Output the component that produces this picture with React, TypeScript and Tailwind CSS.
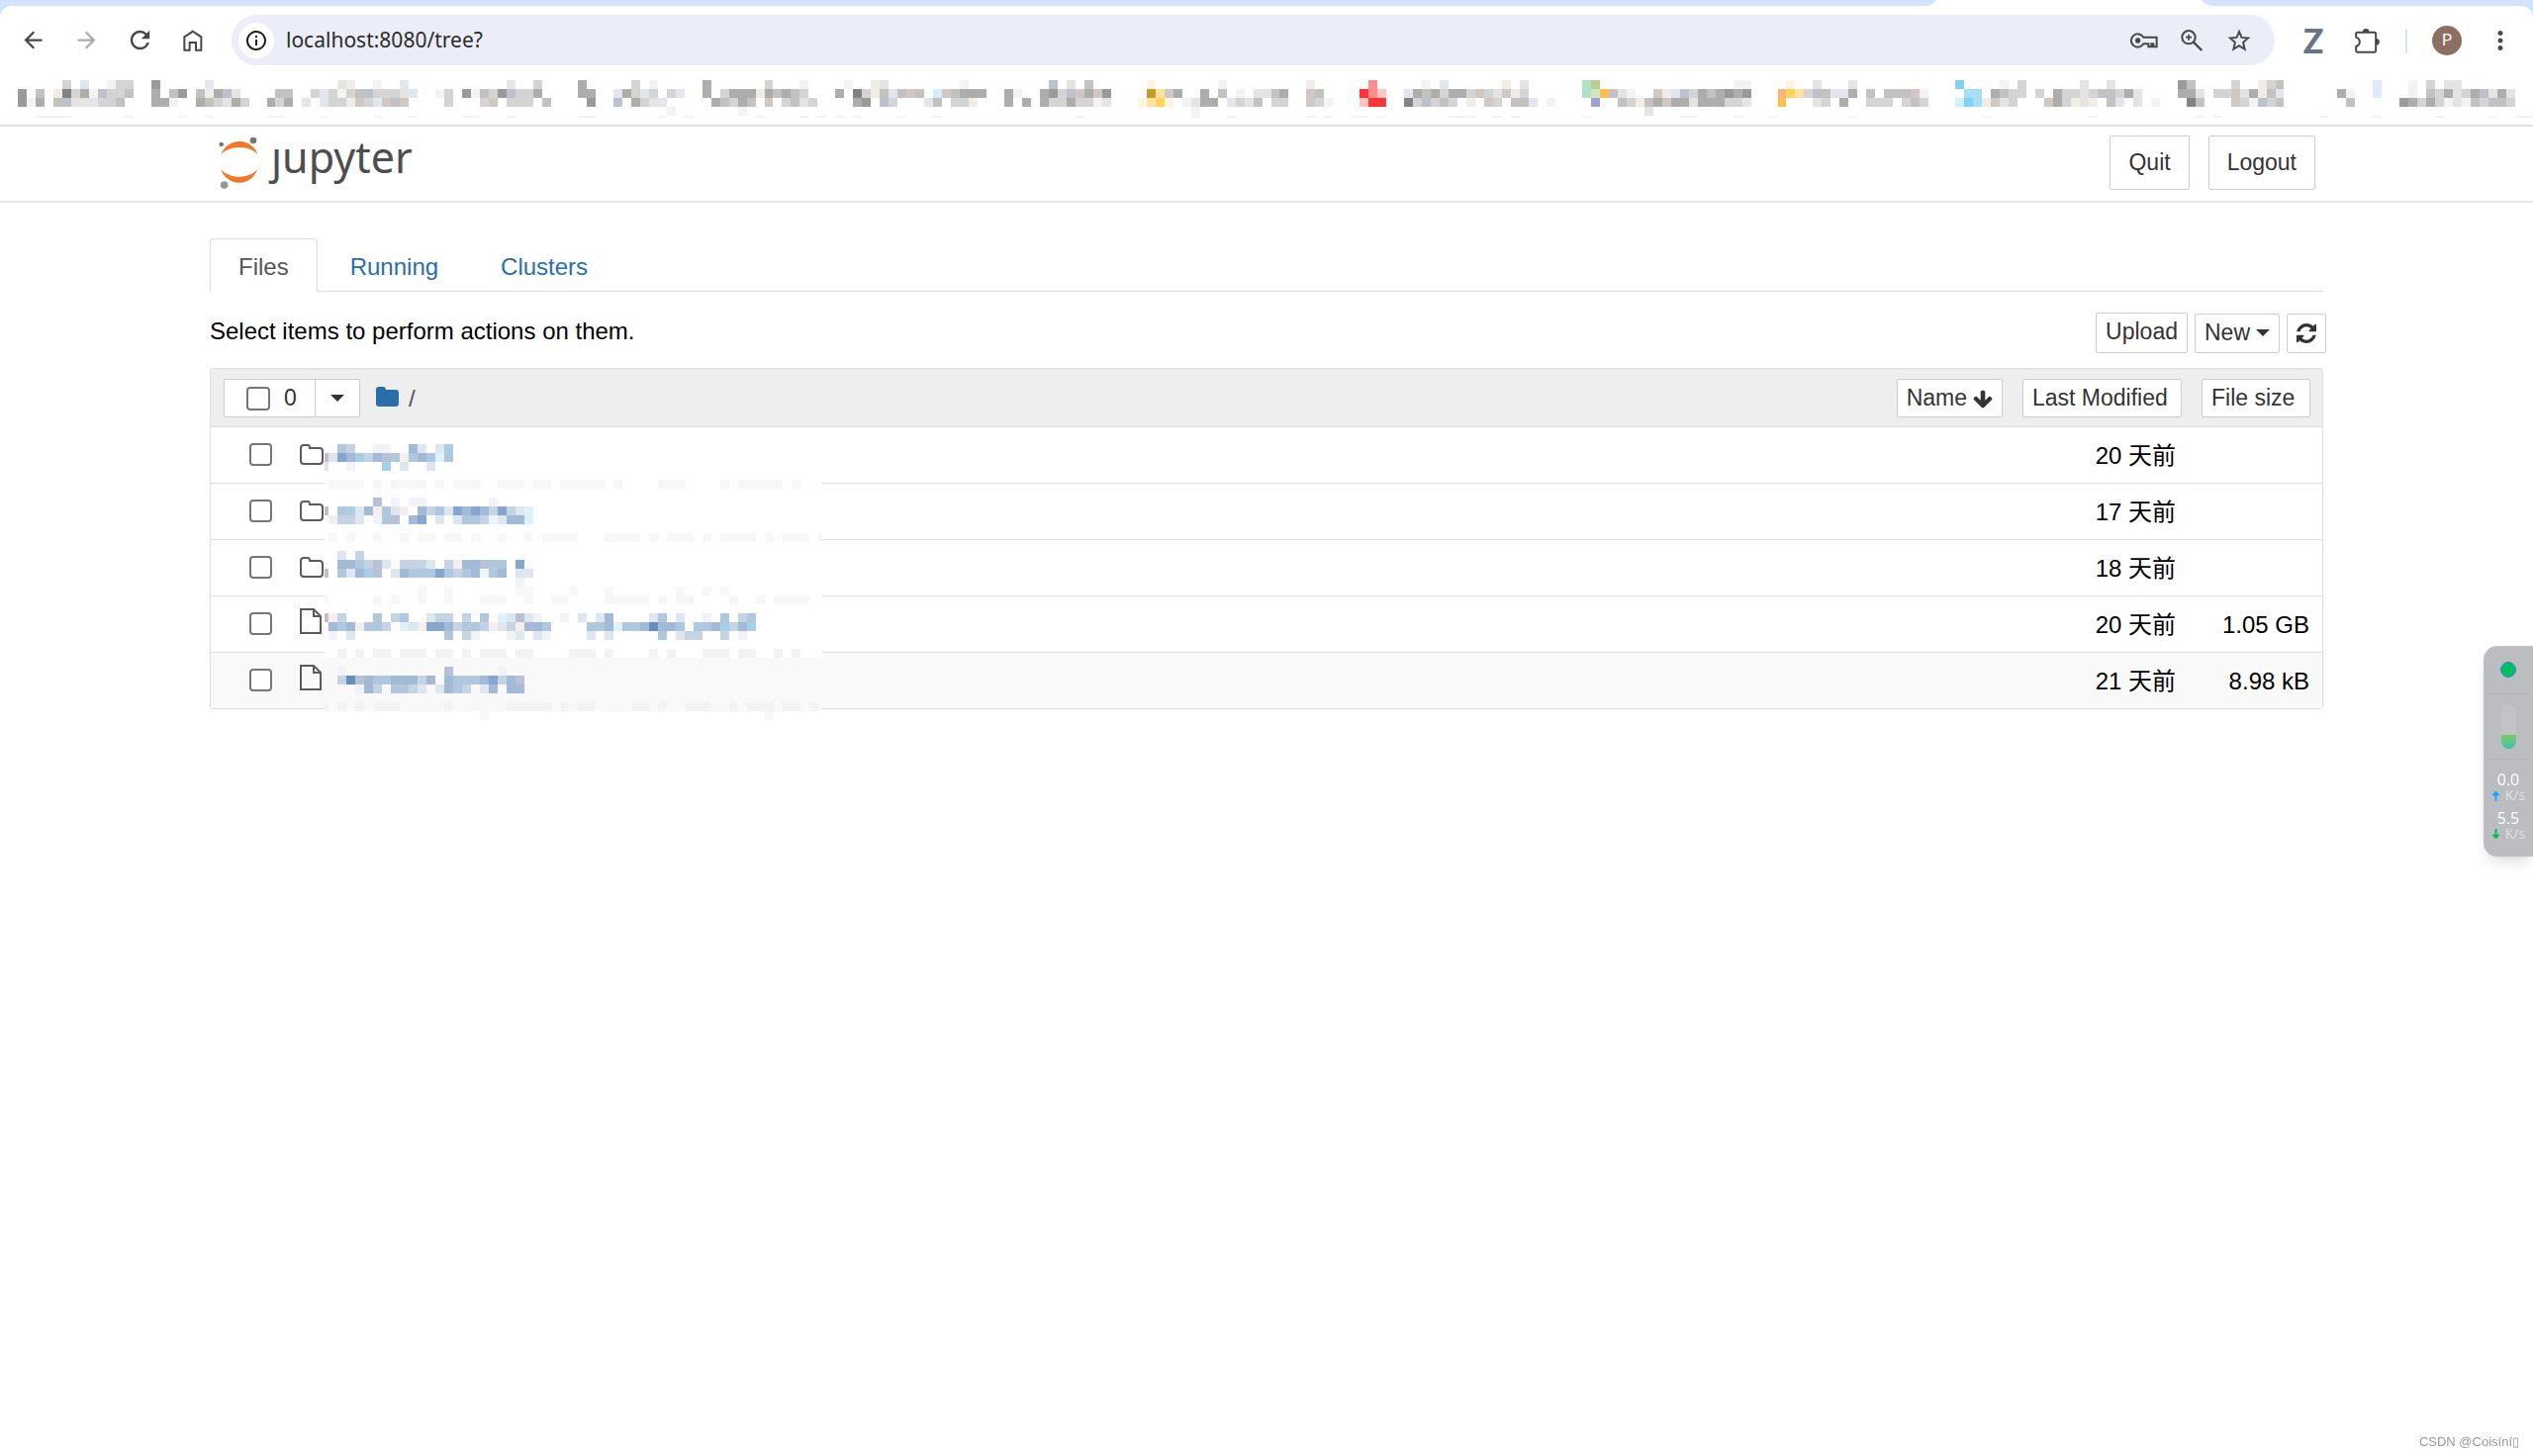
import { useState } from "react";
import type { ReactNode } from "react";
import {
  MdArrowBack,
  MdArrowForward,
  MdInfoOutline,
  MdMoreVert,
  MdRefresh,
} from "react-icons/md";

// Pixelated areas. Every row holds runs of cells: the start column,
// then one palette letter per cell ("." leaves a cell empty).
type MosaicRow = { y: number; h?: number; runs: string };

const BOOKMARK_COLORS: Record<string, string> = {
  a: "#f3f3f3",
  b: "#e4e4e3",
  c: "#d3d4d3",
  d: "#c3c2c1",
  e: "#adadac",
  f: "#9a9a9b",
  g: "#828385",
  h: "#e2e6ed",
  i: "#f2ece6",
  j: "#bcc1cc",
  k: "#d1c8c4",
  w: "#fff5e1",
  z: "#ffe2a0",
  y: "#ffd258",
  Y: "#c99a2c",
  R: "#ff3538",
  r: "#ff8c8d",
  q: "#ffc4c4",
  G: "#b2e0c2",
  m: "#b8cf92",
  n: "#d0e6c6",
  P: "#9ca2d8",
  O: "#ffc04a",
  o: "#f5b581",
  S: "#7fd1f5",
  s: "#a6dff7",
  t: "#d3effb",
  B: "#dfeafe",
};

const BOOKMARK_ROWS: MosaicRow[] = [
  {
    y: 0,
    runs: "5c.h..acc 15f 21h 36bi..a..h 55h 58c 63e 69c.a 77e 84c...a 93a..ib 106a 116j.b.d 127w 135a 145i 152r 158a.h 167i.b 176Gm 193aa 199w..b...b 218S 223a.c 232b..b 243fd 249c..icd 265B 269a.c.bb",
  },
  {
    y: 1,
    runs: "0f.d.igceajccd 15e.df.diejb 29dd 33chcacdjcccbh 47ac.fadcfjcce 63ee 67hechc.ch 77e.ceeeiededc 92e.gcidhdkd.tkdeee 111ea..efcjkekf 127Yzke..e.d.a.bbde 145kd 151Rrq 156hedeceeckcbkic 176GnOdba..kihjcedefef 198oyzcjdhhe.d.dddka 219ss.edcc.c.eccbcddceb 243eeb.cckbeidh 261ea 265B 269a.dcebcejbeb",
  },
  {
    y: 2,
    runs: "0fae.djbbhccd 15eea..edcbec 28ece.h.hccikchkdk 48c...ck.ccc.d 64f..j.ecbh 78edced.k.cdbc 94ef.jc...hd.cci 111e.e.ecceccab 126wzyw.abee.hcbd.cc 145kca 151qRR 156gcjcdc.i.kc.ddh.a 177P..dcidekeebeeecch 198O...bc.e..ccc.cdc 218tSsikbc...kecibi.dh.b.a 244gd...kcajcd 262d 268fececabadcddc",
  },
  { y: 3, runs: "73a 81a 132a 183b" },
  {
    y: 4,
    h: 0.25,
    runs: "2aaaa 12a 18a 21a 28aa 34a 40a 44a 50aa 55a 63aa 72a 75a 83a 88a 90a 92a 94a 99a 103a 119a 132a 136a 145a 147a 150aa.a 161aaa 166a.a 176a 187aa 193a 197a 206a 221a 233a 245a.a 259a 265a 272a 278a 281aa",
  },
];

const NAME_COLORS: Record<string, string> = {
  A: "#6490bf",
  B: "#86a6cf",
  C: "#a2bad6",
  D: "#b0c8de",
  E: "#c4d4e4",
  F: "#dee6f0",
  G: "#f0f4f9",
  H: "#b9c1d6",
  I: "#f6eeee",
  T: "#a9cfe5",
  U: "#dff1fa",
  V: "#c3bfc4",
  W: "#f7f7f7",
  X: "#f3f3f3",
};

const NAME_ROWS: MosaicRow[] = [
  { y: 0, runs: "2DE..GG..CF.FT" },
  { y: 1, runs: "0VFBCTECHDIDCDUD" },
  { y: 2, runs: "0F..G...T.F..F" },
  { y: 4, runs: "1WWWW.W.WWWW.W.WWW..WWW.WW.WWWWW.W....WWW....W.WWWWW.W" },
  { y: 6, runs: "6H.G.GG 19G" },
  { y: 7, runs: "0V.DTFCIDFI.CEDFBCBCEBEFU" },
  { y: 8, runs: "1IEEF.GDH.CB.F.FDDEGFCCU" },
  { y: 10, runs: "1W.W..W..W.WW.WW.W..W..W.WWWW...WWWW.W.WWW.W.WWWW.W.WWW.W" },
  { y: 12, runs: "2F.E" },
  { y: 13, runs: "2CCDEHF.EEEF.EICCHDD.B" },
  { y: 14, runs: "0V.DFCTH.FCDDDBDEDCGDC.FF" },
  { y: 15, runs: "22G" },
  { y: 16, runs: "11W..W.......WW....W...W.......W..W.W" },
  { y: 17, runs: "0W.....W.W..W..W...WWW..W..WW....WWWWW.W.WW....W..W.WWWW" },
  { y: 19, runs: "0VIE...D.ED..FEE.E.D.UFHFG..G.F.FC....FD.F..G.D.ED" },
  { y: 20, runs: "1CDCIDDE.UFIBBCEDDEIFEICCD....DDCUDDCACCD.DDCTECT" },
  { y: 21, runs: "1G.F..........D.EG...GF.FG....F.F.....D.FEE..E.G" },
  { y: 23, runs: "2X.X.XX.XXX.XX.X.XXX.XX....XXX.X....X.X...XXX.XX..X.X" },
  { y: 25, runs: "2G...........H.....G" },
  { y: 26, runs: "2EAHCDDCCCEC.CDDDCBECH" },
  { y: 27, runs: "4GCE.DDEF.FCDE.FC.CC" },
  { y: 29, runs: "0X.X.X.XXX.....X......XXXXX.X.XX....XX.X..XXX..X.XXX.XX.X" },
  { y: 30, runs: "18W 50W" },
];

function Cells({ rows, colors }: { rows: MosaicRow[]; colors: Record<string, string> }) {
  return (
    <>
      {rows.flatMap(({ y, h = 1, runs }) =>
        runs.split(" ").flatMap((run) => {
          const start = parseInt(run, 10);
          const letters = run.replace(/^\d+/, "");
          return [...letters].map((letter, i) =>
            colors[letter] ? (
              <rect
                key={`${y}-${start + i}`}
                x={start + i}
                y={y}
                width={1}
                height={h}
                fill={colors[letter]}
              />
            ) : null
          );
        })
      )}
    </>
  );
}

const FILES = [
  { kind: "folder", modified: "20 天前", size: "" },
  { kind: "folder", modified: "17 天前", size: "" },
  { kind: "folder", modified: "18 天前", size: "" },
  { kind: "file", modified: "20 天前", size: "1.05 GB" },
  { kind: "file", modified: "21 天前", size: "8.98 kB" },
];

function HomeIcon() {
  return (
    <svg viewBox="550 84 70 72" className="h-6 w-6" fill="none" stroke="#474747" strokeWidth="6">
      <path d="M559 109L584.500 92L610 109V149H594V126H575V149H559Z" />
    </svg>
  );
}

function KeyIcon() {
  return (
    <svg viewBox="41 98 84 46" className="h-4 w-7" fill="none" stroke="#474747" strokeWidth="6">
      <path d="M81 111A20 20 0 1 0 81 131H96V140H105V131H111V140H121V111Z" />
      <circle cx="64" cy="121" r="8" fill="#474747" stroke="none" />
    </svg>
  );
}

function ZoomIcon() {
  return (
    <svg viewBox="190 86 72 72" className="h-6 w-6" fill="none" stroke="#474747" strokeWidth="6">
      <circle cx="217" cy="112" r="20" />
      <path d="M231 126L257 152" strokeWidth="7" />
      <path d="M217 103V121M208 112H226" strokeWidth="5" />
    </svg>
  );
}

function StarIcon() {
  return (
    <svg viewBox="334 83 73 73" className="h-6 w-6" fill="none" stroke="#474747" strokeWidth="6">
      <path d="M370.500 92L378 110L398 112L383 125L387.500 146L370.500 135L353.500 146L358 125L343 112L363 110Z" />
    </svg>
  );
}

function PuzzleIcon() {
  return (
    <svg viewBox="722 78 80 78" className="h-[26px] w-[27px]" fill="none" stroke="#474747" strokeWidth="6">
      <path d="M732 92H784Q788 92 788 96V148Q788 152 784 152H732Q728 152 728 148V135Q739 131 739 121T728 107V96Q728 92 732 92Z" />
      <path d="M748 91a10 10 0 0 1 20 0zM789 111a10 10 0 0 1 0 20z" fill="#474747" stroke="none" />
    </svg>
  );
}

function JupyterMark() {
  return (
    <svg viewBox="660 415 126 162" className="h-[54px] w-[42px]">
      <path d="M669 471C690 417 762 417 781 469C757 441 693 441 669 471Z" fill="#f37726" />
      <path d="M669 514C690 569 762 569 781 514C755 545 695 545 669 514Z" fill="#f37726" />
      <circle cx="671" cy="439" r="7" fill="#767677" />
      <circle cx="768" cy="427" r="10" fill="#767677" />
      <circle cx="680" cy="562" r="11.500" fill="#989798" />
    </svg>
  );
}

function RefreshIcon() {
  return (
    <svg viewBox="0 0 1536 1536" className="h-5 w-5" fill="#333">
      <path d="M1511 928q0 5-1 7-64 268-268 434.500t-478 166.500q-146 0-282.500-55t-243.500-157l-129 129q-19 19-45 19t-45-19-19-45v-448q0-26 19-45t45-19h448q26 0 45 19t19 45-19 45l-137 137q71 66 161 102t187 36q134 0 250-65t186-179q11-17 53-117 8-23 30-23h192q13 0 22.500 9.500t9.500 22.500zm25-800v448q0 26-19 45t-45 19h-448q-26 0-45-19t-19-45 19-45l138-138q-148-137-349-137-134 0-250 65t-186 179q-11 17-53 117-8 23-30 23h-199q-13 0-22.500-9.500t-9.500-22.500v-7q65-268 270-434.500t480-166.500q146 0 284 55.500t245 156.500l130-129q19-19 45-19t45 19 19 45z" />
    </svg>
  );
}

function ArrowDownIcon() {
  return (
    <svg viewBox="0 0 1664 1640" className="h-5 w-5" fill="#333">
      <path d="M1611 832q0 53-37 90l-651 652q-39 37-91 37-53 0-90-37l-651-652q-38-36-38-90 0-53 38-91l74-75q39-37 91-37 53 0 90 37l294 294v-704q0-52 38-90t90-38h128q52 0 90 38t38 90v704l294-294q37-37 90-37 52 0 91 37l75 75q37 39 37 91z" />
    </svg>
  );
}

function Caret() {
  return (
    <svg viewBox="0 0 14 7" className="h-[7px] w-[14px]" fill="#333">
      <path d="M0 0H14L7 7Z" />
    </svg>
  );
}

function FolderOutline() {
  return (
    <svg viewBox="0 0 24 21" className="h-[21px] w-6" fill="none" stroke="#5c5c5c" strokeWidth="2">
      <path d="M1 4Q1 1 4 1H8Q10 1 10 4H20Q23 4 23 7V17Q23 20 20 20H4Q1 20 1 17Z" />
    </svg>
  );
}

function FileOutline() {
  return (
    <svg viewBox="0 0 22 26" className="mb-[6px] h-[26px] w-[22px]" fill="none" stroke="#5c5c5c" strokeWidth="2">
      <path d="M1 1H14L21 8V25H1ZM14 1V8H21" />
    </svg>
  );
}

function ToolbarButton({ label, children }: { label: string; children: ReactNode }) {
  return (
    <button aria-label={label} className="flex h-12 w-[54px] items-center justify-center text-[#474747]">
      {children}
    </button>
  );
}

function BrowserChrome() {
  return (
    <div className="border-b-2 border-[#e0e0e0] bg-[#d3e3fd]">
      {/* Bottom edge of the tab strip */}
      <div className="flex h-[6px] justify-end pr-[324px]">
        <svg viewBox="0 0 288 6" className="h-[6px] w-[288px]" fill="#fff">
          <path d="M0 6Q6 5 9 0H277Q280 5 288 6Z" />
        </svg>
      </div>
      <div className="rounded-t-xl bg-white pt-[9px]">
        <div className="flex items-center px-[6px]">
          <ToolbarButton label="Back">
            <MdArrowBack size={27} />
          </ToolbarButton>
          <button aria-label="Forward" disabled className="flex h-12 w-[54px] items-center justify-center text-[#ababab]">
            <MdArrowForward size={27} />
          </button>
          <ToolbarButton label="Reload">
            <MdRefresh size={29} />
          </ToolbarButton>
          <ToolbarButton label="Home">
            <HomeIcon />
          </ToolbarButton>
          <div className="ml-3 flex h-[51px] flex-1 items-center rounded-full bg-[#ebeef8] pr-3 pl-[7px]">
            <button
              aria-label="View site information"
              className="flex h-9 w-9 items-center justify-center rounded-full bg-white text-[#1f1f1f]"
            >
              <MdInfoOutline size={24} />
            </button>
            <input
              aria-label="Address"
              defaultValue="localhost:8080/tree?"
              className="ml-3 flex-1 bg-transparent font-['Noto_Sans',sans-serif] text-[21px] text-[#2b2b2b] outline-none"
            />
            <button aria-label="Passwords" className="flex h-12 w-12 items-center justify-center">
              <KeyIcon />
            </button>
            <button aria-label="Zoom" className="flex h-12 w-12 items-center justify-center">
              <ZoomIcon />
            </button>
            <button aria-label="Bookmark this tab" className="flex h-12 w-12 items-center justify-center">
              <StarIcon />
            </button>
          </div>
          <div className="ml-3 flex items-center">
            <ToolbarButton label="Zotero">
              <span className="font-[Lato,sans-serif] text-[34px] leading-none font-black text-[#687785]">
                Z
              </span>
            </ToolbarButton>
            <ToolbarButton label="Extensions">
              <PuzzleIcon />
            </ToolbarButton>
            <div className="ml-3 h-6 w-[2px] bg-[#d3e3fd]" />
            <button
              aria-label="Profile"
              className="ml-[25px] flex h-[30px] w-[30px] items-center justify-center rounded-full bg-[#8d6e63] font-[Roboto,sans-serif] text-base text-white"
            >
              P
            </button>
            <div className="ml-3">
              <ToolbarButton label="Menu">
                <MdMoreVert size={30} />
              </ToolbarButton>
            </div>
          </div>
        </div>
        <div className="pt-[15px] pb-[7px] pl-[18px]">
          <svg
            viewBox="0 0 283 4.250"
            preserveAspectRatio="none"
            shapeRendering="crispEdges"
            className="h-[38px] w-full"
          >
            <Cells rows={BOOKMARK_ROWS} colors={BOOKMARK_COLORS} />
          </svg>
        </div>
      </div>
    </div>
  );
}

const TABS = ["Files", "Running", "Clusters"];

const BUTTON = "flex items-center rounded-[2px] border border-[#ccc] bg-white text-[23px] text-[#333]";
const CHECKBOX = "appearance-none rounded-[4px] border-2 border-[#767676] bg-white checked:bg-[#1a73e8]";

function FileList() {
  return (
    <div className="relative rounded-[3px] border border-[#ddd]">
      <table className="w-full border-collapse text-2xl">
        <thead>
          <tr className="h-[58px] border-b border-[#ddd] bg-[#eee]">
            <th className="p-0 pt-[2px] font-normal">
              <div className="flex items-center pl-[13px]">
                <label className="flex h-[39px] w-[93px] items-center gap-[14px] rounded-l-[2px] border border-[#ccc] bg-white pl-[22px] text-[23px] text-[#333]">
                  <input type="checkbox" aria-label="Select all" className={`${CHECKBOX} h-6 w-6`} />0
                </label>
                <button
                  aria-label="Selection menu"
                  className="flex h-[39px] w-[45px] items-center justify-center rounded-r-[2px] border border-l-0 border-[#ccc] bg-white"
                >
                  <Caret />
                </button>
                <a href="#root" aria-label="Root folder" className="mb-1 ml-4">
                  <svg viewBox="0 0 23 20" className="h-5 w-[23px]" fill="#296eaa">
                    <path d="M0 3Q0 0 3 0H7Q10 0 10 3H20Q23 3 23 6V17Q23 20 20 20H3Q0 20 0 17Z" />
                  </svg>
                </a>
                <span className="ml-[10px] text-[#555]">/</span>
                <button className={`${BUTTON} ml-auto h-[39px] gap-[6px] px-[9px]`}>
                  Name <ArrowDownIcon />
                </button>
              </div>
            </th>
            <th className="w-[181px] p-0 pt-[2px] pl-5 font-normal">
              <button className={`${BUTTON} h-[39px] w-full pl-[9px]`}>Last Modified</button>
            </th>
            <th className="w-[142px] p-0 pt-[2px] pr-3 pl-5 font-normal">
              <button className={`${BUTTON} h-[39px] w-full pl-[9px]`}>File size</button>
            </th>
          </tr>
        </thead>
        <tbody>
          {FILES.map((file, i) => (
            <tr key={i} className="h-[57px] border-b border-[#ddd] last:border-b-0 last:bg-[#f9f9f9]">
              <td className="p-0">
                <div className="flex items-center gap-7 pl-[39px]">
                  <input
                    type="checkbox"
                    aria-label={`Select ${file.kind} ${i + 1}`}
                    className={`${CHECKBOX} h-[23px] w-[23px]`}
                  />
                  {file.kind === "folder" ? <FolderOutline /> : <FileOutline />}
                </div>
              </td>
              <td className="p-0 pt-[2px] pr-[6px] text-right">{file.modified}</td>
              <td className="p-0 pt-[2px] pr-[13px] text-right">{file.size}</td>
            </tr>
          ))}
        </tbody>
      </table>
      {/* Redacted names, laid over the rows */}
      <svg
        viewBox="0 0 503 279"
        shapeRendering="crispEdges"
        className="pointer-events-none absolute top-[76px] left-[115px] h-[279px] w-[503px]"
      >
        <rect width="503" height="216" fill="#fff" />
        <rect y="216" width="503" height="54" fill="#f9f9f9" />
        <g transform="translate(-5 0) scale(9)">
          <Cells rows={NAME_ROWS} colors={NAME_COLORS} />
        </g>
      </svg>
    </div>
  );
}

function SpeedMeter() {
  return (
    <aside className="fixed top-[653px] right-0 flex h-[213px] w-[50px] flex-col items-center rounded-l-[14px] bg-[#bcbdc1] pt-4 font-['Open_Sans',sans-serif] text-white shadow-lg">
      <div className="h-4 w-4 rounded-full border border-[#3a86c8] bg-[#00bf63]" />
      <div className="mt-4 h-px w-10 bg-[#b2b3b7]" />
      <div className="mt-[10px] flex h-[45px] w-[15px] flex-col justify-end overflow-hidden rounded-full bg-[#c2c3c7]">
        <div className="h-[14px] bg-linear-to-b from-[#7acb5c] to-[#36c2b4]" />
      </div>
      <div className="mt-[10px] h-px w-10 bg-[#b2b3b7]" />
      <div className="mt-3 flex flex-col items-center gap-[7px]">
        <Speed value="0.0" color="#16a8ff" path="M4 11V5H1L4.500 1L8 5H5V11Z" />
        <Speed value="5.5" color="#0cb868" path="M4 0V6H1L4.500 10L8 6H5V0Z" />
      </div>
    </aside>
  );
}

function Speed({ value, color, path }: { value: string; color: string; path: string }) {
  return (
    <div className="flex flex-col items-center text-base leading-4">
      <span>{value}</span>
      <span className="flex items-center gap-[5px] text-[14px] leading-4 text-[#e2e2e5]">
        <svg viewBox="0 0 9 11" className="h-[11px] w-[9px]">
          <path d={path} fill={color} stroke={color} />
        </svg>
        K/s
      </span>
    </div>
  );
}

export default function App() {
  const [tab, setTab] = useState("Files");

  return (
    <div className="min-h-screen bg-white font-['Liberation_Sans','Noto_Sans_CJK_SC',sans-serif] text-black">
      <BrowserChrome />
      <header className="border-b-2 border-[#e7e7e7]">
        <div className="mx-auto flex h-[75px] max-w-[2136px] items-start justify-between px-2 pt-[9px]">
          <a href="#root" aria-label="jupyter" className="flex items-center gap-3">
            <JupyterMark />
            <span className="mb-3 font-['Noto_Sans',sans-serif] text-[43px] leading-none text-[#4e4e4e]">
              ȷupyter
            </span>
          </a>
          <div className="flex gap-[19px]">
            <button className={`${BUTTON} h-[55px] px-[18px]`}>Quit</button>
            <button className={`${BUTTON} h-[55px] px-[18px]`}>Logout</button>
          </div>
        </div>
      </header>

      <main className="mx-auto max-w-[2136px] pt-9">
        <nav className="flex gap-[3px] border-b border-[#ddd] text-2xl">
          {TABS.map((name) => (
            <button
              key={name}
              onClick={() => setTab(name)}
              className={
                tab === name
                  ? "-mb-px h-[54px] rounded-t-[4px] border border-b-0 border-[#ddd] bg-white px-7 pt-[3px] text-[#555]"
                  : "h-[53px] px-[30px] pt-1 text-[#296eaa]"
              }
            >
              {name}
            </button>
          ))}
        </nav>

        <div className="mt-[21px] -mr-[3px] mb-[15px] flex items-center justify-between">
          <p className="pb-1 text-2xl">Select items to perform actions on them.</p>
          <div className="flex items-end gap-[7px]">
            <button className={`${BUTTON} h-[41px] px-[9px] pb-[3px]`}>Upload</button>
            <button className={`${BUTTON} h-10 gap-[6px] px-[9px] pb-[2px]`}>
              New <Caret />
            </button>
            <button aria-label="Refresh" className={`${BUTTON} h-10 w-10 justify-center`}>
              <RefreshIcon />
            </button>
          </div>
        </div>

        <FileList />
      </main>

      <SpeedMeter />
      <p className="fixed right-[14px] bottom-[5px] text-[13px] text-[#999]">CSDN @Coisíní▯</p>
    </div>
  );
}
